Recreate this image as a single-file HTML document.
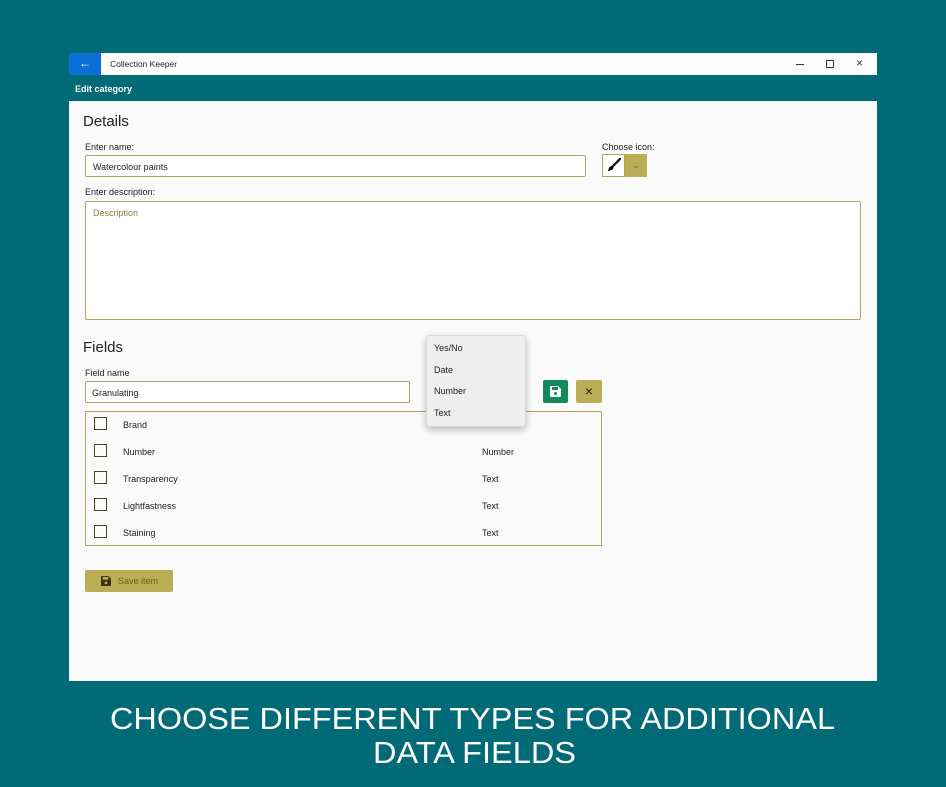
<!DOCTYPE html>
<html><head><meta charset="utf-8"><style>
*{margin:0;padding:0;box-sizing:border-box}
body{width:946px;height:787px;background:#006a76;font-family:"Liberation Sans",sans-serif;position:relative;overflow:hidden}
.a{position:absolute}
.win{left:69px;top:53px;width:808px;height:628px;background:#fafafa}
.t{font-size:9px;color:#222}
.inp{border:1.5px solid #b0a660;background:#fff;border-radius:2px}
.cb{width:13px;height:13px;border:1.5px solid #4a4520}
</style></head><body>
<div class="a win">
 <div class="a" style="left:0;top:0;width:808px;height:22px;background:#fff"></div>
 <div class="a" style="left:0;top:0;width:32px;height:22px;background:#0b6fd6;color:#fff;font-size:12px;text-align:center;line-height:21px">&#8592;</div>
 <div class="a t" style="left:41px;top:6px;font-size:8.5px">Collection Keeper</div>
 <div class="a" style="left:727px;top:11px;width:8px;height:1px;background:#333"></div>
 <div class="a" style="left:757px;top:7px;width:8px;height:8px;border:1px solid #333"></div>
 <div class="a" style="left:787px;top:3px;font-size:12px;color:#333">&#215;</div>
 <div class="a" style="left:0;top:22px;width:808px;height:26px;background:#006a76"></div>
 <div class="a" style="left:6px;top:31px;font-size:9px;font-weight:bold;color:#fff">Edit category</div>
 <div class="a" style="left:14px;top:60px;font-size:15px;color:#222">Details</div>
 <div class="a t" style="left:16px;top:89px">Enter name:</div>
 <div class="a inp" style="left:16px;top:102px;width:501px;height:22px"></div>
 <div class="a t" style="left:24px;top:109px">Watercolour paints</div>
 <div class="a t" style="left:533px;top:89px">Choose icon:</div>
 <div class="a" style="left:533px;top:101px;width:23px;height:23px;border:1px solid #b0a660;background:#fff"></div>
 <svg class="a" style="left:537px;top:104px" width="16" height="16" viewBox="0 0 16 16"><path d="M14 2 L7 9" stroke="#000" stroke-width="2.2" stroke-linecap="round"/><path d="M6 9 C3 9 3 12 1.5 14 C5 14 8 12 7.5 10 Z" fill="#000"/></svg>
 <div class="a" style="left:556px;top:101px;width:22px;height:23px;background:#b9ae55;color:#6b6420;font-size:9px;text-align:center;line-height:22px">&#8964;</div>
 <div class="a t" style="left:16px;top:134px">Enter description:</div>
 <div class="a inp" style="left:16px;top:148px;width:776px;height:119px"></div>
 <div class="a t" style="left:24px;top:155px;color:#8a8040">Description</div>
 <div class="a" style="left:14px;top:286px;font-size:15px;color:#222">Fields</div>
 <div class="a t" style="left:16px;top:315px">Field name</div>
 <div class="a inp" style="left:16px;top:328px;width:325px;height:22px"></div>
 <div class="a t" style="left:23px;top:335px">Granulating</div>
 <div class="a" style="left:474px;top:327px;width:25px;height:23px;background:#148a5c;border-radius:2px"></div>
 <svg class="a" style="left:481px;top:333px" width="11" height="11" viewBox="0 0 11 11"><path d="M0 1 Q0 0 1 0 H8 L11 3 V10 Q11 11 10 11 H1 Q0 11 0 10Z" fill="#fff"/><rect x="2" y="1" width="6" height="3" fill="#148a5c"/><circle cx="5.5" cy="7.5" r="1.5" fill="#148a5c"/></svg>
 <div class="a" style="left:507px;top:327px;width:26px;height:23px;background:#b9ae55;border-radius:2px;text-align:center;line-height:22px;font-size:14px;color:#222">&#215;</div>
 <div class="a" style="left:16px;top:358px;width:517px;height:135px;border:1.5px solid #b0a660"></div>
 <div class="a cb" style="left:25px;top:364px"></div><div class="a t" style="left:54px;top:367px">Brand</div>
 <div class="a cb" style="left:25px;top:391px"></div><div class="a t" style="left:54px;top:394px">Number</div><div class="a t" style="left:413px;top:394px">Number</div>
 <div class="a cb" style="left:25px;top:418px"></div><div class="a t" style="left:54px;top:421px">Transparency</div><div class="a t" style="left:413px;top:421px">Text</div>
 <div class="a cb" style="left:25px;top:445px"></div><div class="a t" style="left:54px;top:448px">Lightfastness</div><div class="a t" style="left:413px;top:448px">Text</div>
 <div class="a cb" style="left:25px;top:472px"></div><div class="a t" style="left:54px;top:475px">Staining</div><div class="a t" style="left:413px;top:475px">Text</div>
 <div class="a" style="left:357px;top:282px;width:100px;height:92px;background:#eeeeee;border:1px solid #d8d8d8;border-radius:3px;box-shadow:0 3px 8px rgba(0,0,0,.25)"></div>
 <div class="a t" style="left:365px;top:290px">Yes/No</div>
 <div class="a t" style="left:365px;top:312px">Date</div>
 <div class="a t" style="left:365px;top:333px">Number</div>
 <div class="a t" style="left:365px;top:355px">Text</div>
 <div class="a" style="left:16px;top:517px;width:88px;height:22px;background:#b9ae55;border-radius:2px"></div>
 <svg class="a" style="left:32px;top:523px" width="10" height="10" viewBox="0 0 11 11"><path d="M0 1 Q0 0 1 0 H8 L11 3 V10 Q11 11 10 11 H1 Q0 11 0 10Z" fill="#3a3510"/><rect x="2" y="1" width="6" height="3" fill="#b9ae55"/><circle cx="5.5" cy="7.5" r="1.5" fill="#b9ae55"/></svg>
 <div class="a t" style="left:49px;top:523px;color:#6b6420">Save item</div>
</div>
<svg class="a" style="left:0;top:0" width="946" height="787">
 <text x="110" y="729" textLength="725" lengthAdjust="spacingAndGlyphs" font-family="Liberation Sans" font-size="31" fill="#fff">CHOOSE DIFFERENT TYPES FOR ADDITIONAL</text>
 <text x="373" y="763" textLength="203" lengthAdjust="spacingAndGlyphs" font-family="Liberation Sans" font-size="31" fill="#fff">DATA FIELDS</text>
</svg>
</body></html>
